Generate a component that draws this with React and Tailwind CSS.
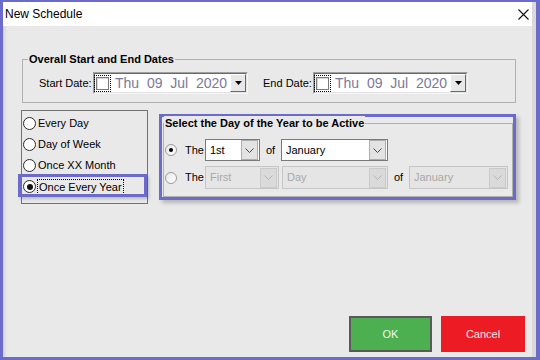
import React from "react";

const font = { fontFamily: '"Liberation Sans", Arial, sans-serif' };

function Chevron({ color = "#444" }) {
  return (
    <svg width="9" height="5" viewBox="0 0 9 5">
      <path d="M0.5 0.5 L4.5 4.5 L8.5 0.5" stroke={color} strokeWidth="1" fill="none" />
    </svg>
  );
}

function Combo({ className, text, disabled }) {
  return (
    <div
      className={
        "flex h-[22px] items-center border " +
        (disabled ? "border-[#c6c6c6] bg-[#e5e5e5] " : "border-[#7a7a7a] bg-white ") +
        className
      }
    >
      <span className={"pl-[4px] text-[11px] leading-none " + (disabled ? "text-[#a8a8a8]" : "text-black")}>
        {text}
      </span>
      <div
        className={
          "ml-auto mr-[1px] flex h-[20px] w-[17px] items-center justify-center border " +
          (disabled ? "border-[#cacaca] bg-[#dadada]" : "border-[#adadad] bg-[#e3e3e3]")
        }
      >
        <Chevron color={disabled ? "#b4b4b4" : "#444"} />
      </div>
    </div>
  );
}

function DatePicker() {
  return (
    <div className="h-[22px] w-[155px] border border-t-[#a0a0a0] border-l-[#a0a0a0] border-r-[#f5f5f5] border-b-[#f5f5f5]">
      <div className="flex h-full w-full items-center border border-t-[#696969] border-l-[#696969] border-r-[#e3e3e3] border-b-[#e3e3e3] bg-white">
        <div className="ml-[-1px] flex h-[17px] w-[17px] items-center justify-center border border-dotted border-black">
          <div className="h-[13px] w-[13px] border border-[#7a7a7a] bg-white shadow-[inset_1px_1px_0_#d8d8d8]" />
        </div>
        <span className="ml-[4px] whitespace-pre text-[14px] leading-none text-[#7a7a9a]">Thu  09  Jul  2020</span>
        <div className="ml-auto flex h-full w-[16px] items-center justify-center border border-t-white border-l-white border-r-[#696969] border-b-[#696969] bg-[#e8e8e8]">
          <svg width="7" height="4" viewBox="0 0 7 4">
            <path d="M0 0 L7 0 L3.5 4 Z" fill="#000" />
          </svg>
        </div>
      </div>
    </div>
  );
}

function PanelRadio({ label, checked }) {
  return (
    <div className="flex h-[21px] items-center">
      <span className="ml-[1px] flex h-[13px] w-[13px] items-center justify-center rounded-full border border-[#2a2a2a] bg-white">
        {checked && <span className="h-[6px] w-[6px] rounded-full bg-[#111]" />}
      </span>
      {checked ? (
        <span className="ml-[1px] border border-dotted border-black px-[1px] text-[11px] leading-[14px] text-black">
          {label}
        </span>
      ) : (
        <span className="ml-[2px] text-[11px] leading-none text-black">{label}</span>
      )}
    </div>
  );
}

function GroupRadio({ checked }) {
  return (
    <span className="flex h-[12px] w-[12px] items-center justify-center rounded-full border border-[#9a9a9a] bg-gradient-to-br from-[#e8e8e8] to-white">
      {checked && <span className="h-[4px] w-[4px] rounded-full bg-black" />}
    </span>
  );
}

export default function App() {
  return (
    <div style={font} className="h-[360px] w-[540px] bg-[#6b6bcc] pb-[3px] pl-[3px] pr-[4px] pt-[2px]">
      <div className="flex h-full w-full flex-col border-r-4 border-r-[#d9d9d9]">
        {/* Title bar */}
        <div className="flex h-[24px] shrink-0 items-center justify-between bg-white pl-[2px] pr-[3px]">
          <span className="text-[12px] leading-none text-black">New Schedule</span>
          <svg width="11" height="11" viewBox="0 0 11 11">
            <path d="M0.5 0.5 L10.5 10.5 M10.5 0.5 L0.5 10.5" stroke="#111" strokeWidth="1.1" />
          </svg>
        </div>

        {/* Body */}
        <div className="flex flex-1 flex-col bg-[#e9e9e9] shadow-[inset_4px_0_3px_-2px_rgba(0,0,0,0.10)]">
          {/* Overall group */}
          <div className="relative ml-[19px] mt-[33px] h-[44px] w-[494px] border border-[#b0b0b0]">
            <span className="absolute left-[5px] top-[-8px] bg-[#e9e9e9] px-[1px] text-[11px] font-bold leading-[14px] text-black">
              Overall Start and End Dates
            </span>
            <div className="mt-[12px] flex items-center pl-[16px]">
              <span className="w-[54px] text-[11px] leading-none text-black">Start Date:</span>
              <DatePicker />
              <span className="ml-[15px] w-[50px] text-[11px] leading-none text-black">End Date:</span>
              <DatePicker />
            </div>
          </div>

          <div className="flex items-start">
            {/* Radio panel */}
            <div className="relative ml-[18px] mt-[7px] h-[94px] w-[127px] border border-[#727272] pt-[2px]">
              <PanelRadio label="Every Day" />
              <PanelRadio label="Day of Week" />
              <PanelRadio label="Once XX Month" />
              <PanelRadio label="Once Every Year" checked />
              <div className="pointer-events-none absolute left-[-4px] top-[63px] h-[23px] w-[129px] border-[3px] border-[#6b6bcc] shadow-[2px_2px_3px_rgba(0,0,0,0.2)]" />
            </div>

            {/* Select day group */}
            <div className="ml-[11px] mt-[11px] h-[86px] w-[357px] border-[3px] border-[#6b6bcc] shadow-[3px_3px_4px_rgba(0,0,0,0.22)]">
              <div className="relative ml-[1px] mt-[6px] h-[74px] w-[350px] border border-[#b0b0b0] pt-[15px]">
                <span className="absolute left-[0px] top-[-8px] bg-[#e9e9e9] px-[1px] text-[11px] font-bold leading-[14px] text-black">
                  Select the Day of the Year to be Active
                </span>
                <div className="flex h-[22px] items-center pl-[1px]">
                  <GroupRadio checked />
                  <span className="ml-[8px] w-[20px] text-[11px] leading-none text-black">The</span>
                  <Combo className="w-[55px]" text="1st" />
                  <span className="ml-[6px] w-[15px] text-[11px] leading-none text-black">of</span>
                  <Combo className="w-[107px]" text="January" />
                </div>
                <div className="mt-[5px] flex h-[23px] items-center pl-[1px]">
                  <GroupRadio />
                  <span className="ml-[8px] w-[20px] text-[11px] leading-none text-black">The</span>
                  <Combo className="h-[23px] w-[74px]" text="First" disabled />
                  <Combo className="ml-[3px] h-[23px] w-[106px]" text="Day" disabled />
                  <span className="ml-[6px] w-[15px] text-[11px] leading-none text-black">of</span>
                  <Combo className="h-[23px] w-[99px]" text="January" disabled />
                </div>
              </div>
            </div>
          </div>

          {/* Buttons */}
          <div className="mb-[5px] mt-auto flex justify-end gap-[9px] pr-[7px]">
            <button className="flex h-[36px] w-[83px] items-center justify-center border-2 border-[#5a5a5a] bg-[#4caf50] text-[11px] text-[#eef8ee]">
              OK
            </button>
            <button className="flex h-[36px] w-[84px] items-center justify-center bg-[#ed1c24] text-[11px] text-[#fbeaea]">
              Cancel
            </button>
          </div>
        </div>
      </div>
    </div>
  );
}
